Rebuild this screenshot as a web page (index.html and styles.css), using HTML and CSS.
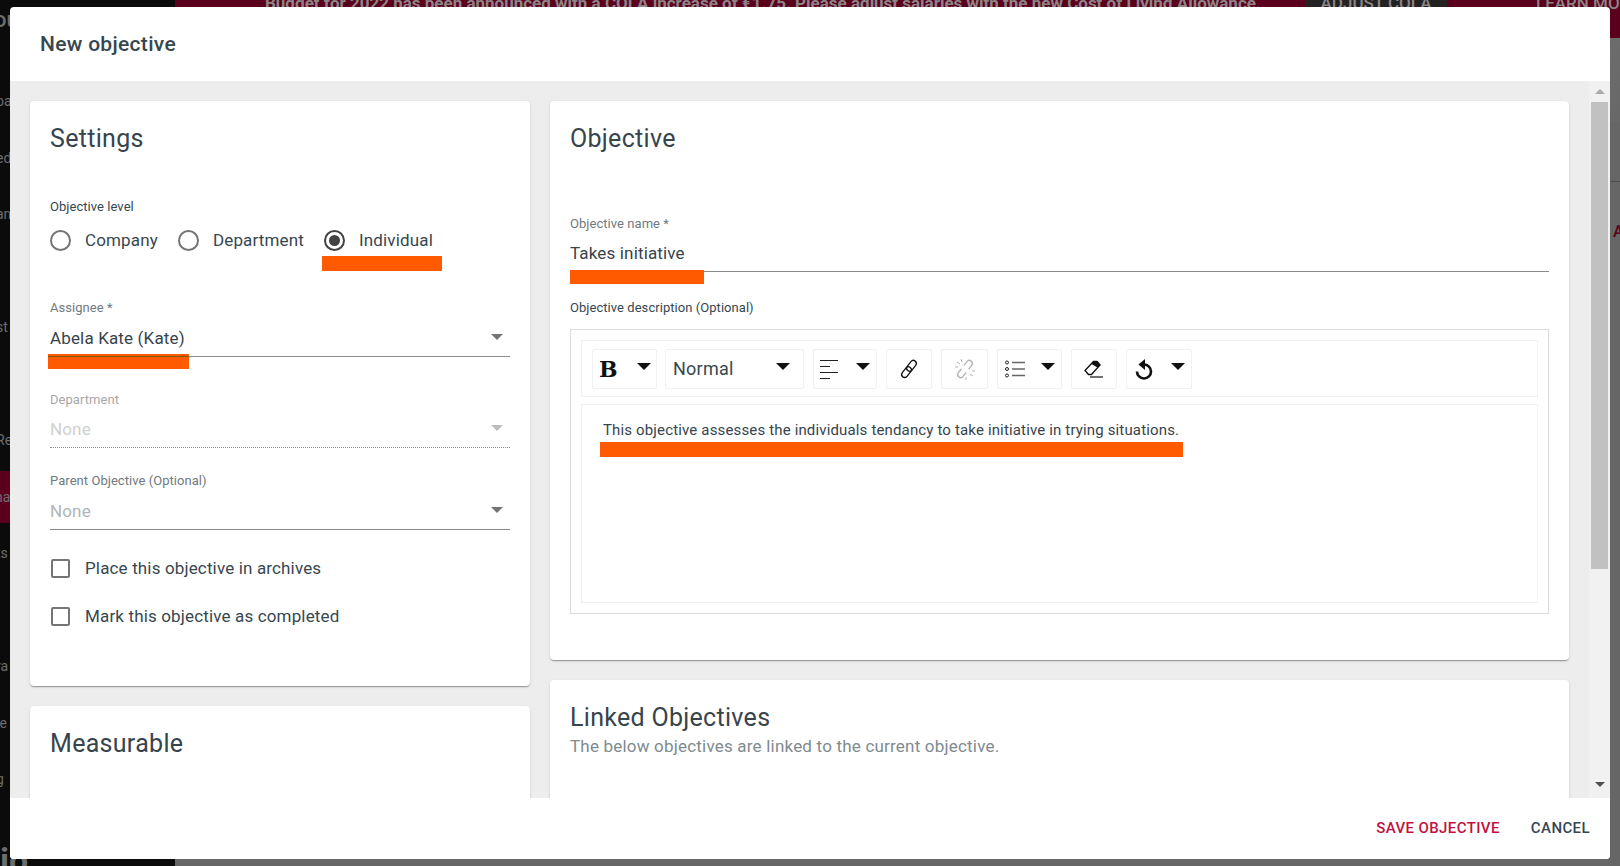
FILE: index.html
```html
<!DOCTYPE html>
<html lang="en">
<head>
<meta charset="utf-8">
<title>New objective</title>
<link rel="stylesheet" href="styles.css">
</head>
<body>
<div class="page">
  <aside class="sidebar">
    <div class="brand">ou</div>
    <nav class="nav">
      <div class="nav-item">oa</div>
      <div class="nav-item">ed</div>
      <div class="nav-item">an</div>
      <div class="nav-item"></div>
      <div class="nav-item">st</div>
      <div class="nav-item"></div>
      <div class="nav-item">Re</div>
      <div class="nav-item nav-active">na</div>
      <div class="nav-item">ts</div>
      <div class="nav-item"></div>
      <div class="nav-item">ra</div>
      <div class="nav-item">le</div>
      <div class="nav-item">g</div>
    </nav>
    <div class="sidebar-logo">io</div>
  </aside>
  <main class="main">
    <div class="banner">
      <span class="banner-text">Budget for 2022 has been announced with a COLA increase of €1.75. Please adjust salaries with the new Cost of Living Allowance.</span>
      <span class="banner-btn">ADJUST COLA</span>
      <span class="banner-link">LEARN MORE</span>
    </div>
    <div class="behind">
      <div class="behind-top"></div>
      <div class="behind-mid"></div>
      <div class="behind-link">A</div>
    </div>
  </main>
</div>

<div class="modal">
  <header class="modal-head">New objective</header>
  <div class="modal-body">
    <div class="scroll-content">
      <div class="col col-left">
        <section class="card card-settings">
          <h2 class="card-title">Settings</h2>
          <div class="label label-level">Objective level</div>
          <div class="radios">
            <label class="radio"><span class="radio-dot"></span>Company</label>
            <label class="radio"><span class="radio-dot"></span>Department</label>
            <label class="radio radio-on"><span class="radio-dot"></span>Individual<span class="mark mark-individual"></span></label>
          </div>
          <div class="field field-assignee">
            <div class="label">Assignee *</div>
            <div class="control control-assignee">
              <span class="value">Abela Kate (Kate)</span><span class="caret"></span>
              <span class="mark mark-assignee"></span>
            </div>
          </div>
          <div class="field field-dept">
            <div class="label label-disabled">Department</div>
            <div class="control control-disabled">
              <span class="value value-disabled">None</span><span class="caret caret-disabled"></span>
            </div>
          </div>
          <div class="field field-parent">
            <div class="label">Parent Objective (Optional)</div>
            <div class="control control-parent">
              <span class="value value-empty">None</span><span class="caret"></span>
            </div>
          </div>
          <label class="check check-first"><span class="check-box"></span>Place this objective in archives</label>
          <label class="check"><span class="check-box"></span>Mark this objective as completed</label>
        </section>
        <section class="card card-measurable">
          <h2 class="card-title">Measurable</h2>
        </section>
      </div>
      <div class="col col-right">
        <section class="card card-objective">
          <h2 class="card-title">Objective</h2>
          <div class="field field-name">
            <div class="label">Objective name *</div>
            <div class="control control-name">
              <span class="value">Takes initiative</span>
              <span class="mark mark-name"></span>
            </div>
          </div>
          <div class="label label-desc">Objective description (Optional)</div>
          <div class="wysiwyg">
            <div class="toolbar">
              <div class="tool tool-b"><span class="bold-glyph">B</span><span class="tool-caret"></span></div>
              <div class="tool tool-normal"><span class="normal-text">Normal</span><span class="tool-caret"></span></div>
              <div class="tool tool-align">
                <svg class="icon" width="18" height="20" viewBox="0 0 18 20"><path d="M0 1.5h18M0 7.5h10M0 13.5h18M0 19.5h10" stroke="#222" stroke-width="1" fill="none"/></svg>
                <span class="tool-caret"></span>
              </div>
              <div class="tool tool-icon">
                <svg width="22" height="22" viewBox="0 0 22 22"><g fill="none" stroke="#111" stroke-width="1.3" transform="rotate(-52 11 11)"><rect x="1" y="8" width="12" height="6" rx="3"/><rect x="9" y="8" width="12" height="6" rx="3"/></g></svg>
              </div>
              <div class="tool tool-icon tool-off">
                <svg width="22" height="22" viewBox="0 0 22 22"><g fill="none" stroke="#b5b5b5" stroke-width="1.4"><g transform="rotate(-52 11 11)"><path d="M9 8H4a3 3 0 0 0 0 6h5"/><path d="M13 8h5a3 3 0 0 1 0 6h-5"/></g><path d="M3 4l3 2M1 9l3 0M19 18l-3-2M21 13l-3 0M12 19v3M7 1l1 3" stroke-width="1"/></g></svg>
              </div>
              <div class="tool tool-list">
                <svg class="icon" width="20" height="18" viewBox="0 0 20 18"><g fill="none" stroke="#222"><circle cx="2" cy="2.5" r="1.5"/><circle cx="2" cy="9" r="1.5"/><circle cx="2" cy="15.5" r="1.5"/></g><path d="M7 2.5h13M7 9h13M7 15.500h13" stroke="#666" stroke-width="1.4"/></svg>
                <span class="tool-caret"></span>
              </div>
              <div class="tool tool-icon">
                <svg width="20" height="20" viewBox="0 0 20 20"><path d="M1 11.500L9.500 2.500h3l3.500 3.500-8.500 9.500H4.500z" fill="#fff" stroke="#111" stroke-width="1.3"/><path d="M7.500 5l2.500-3h3.500l3 3.500-3 3z" fill="#111"/><path d="M6 18h13" stroke="#111" stroke-width="1.200"/></svg>
              </div>
              <div class="tool tool-undo">
                <svg width="20" height="22" viewBox="0 0 20 22"><path d="M10 6.500a7 7 0 1 1-7 7" fill="none" stroke="#111" stroke-width="2.600"/><path d="M11 1L4.500 6.500 11 12z" fill="#111"/></svg>
                <span class="tool-caret"></span>
              </div>
            </div>
            <div class="editor">
              <p class="editor-text">This objective assesses the individuals tendancy to take initiative in trying situations.<span class="mark mark-text"></span></p>
            </div>
          </div>
        </section>
        <section class="card card-linked">
          <h2 class="card-title">Linked Objectives</h2>
          <p class="card-sub">The below objectives are linked to the current objective.</p>
        </section>
      </div>
    </div>
    <div class="scrollbar">
      <span class="sb-up"></span>
      <span class="sb-thumb"></span>
      <span class="sb-down"></span>
    </div>
  </div>
  <footer class="modal-foot">
    <button class="btn btn-save">SAVE OBJECTIVE</button>
    <button class="btn">CANCEL</button>
  </footer>
</div>
</body>
</html>
```
FILE: styles.css
```css
* { box-sizing: border-box; }
html, body { margin: 0; height: 100%; overflow: hidden; }
body { font-family: Roboto, "Liberation Sans", sans-serif; color: #37474f; background: #555; }

/* dimmed page behind the dialog */
.page { display: flex; height: 866px; }
.sidebar { width: 175px; flex: none; background: #0b0b0b; color: #6d6d6d; overflow: hidden; display: flex; flex-direction: column; }
.brand { height: 73px; flex: none; padding-top: 8px; font-size: 22px; line-height: 24px; margin-left: -6px; font-weight: 500; }
.nav { display: flex; flex-direction: column; flex: none; }
.nav-item { height: 56.5px; flex: none; line-height: 56.5px; font-size: 14px; margin-left: -4px; }
.nav-active { height: 52px; line-height: 52px; margin: 2px 0 2.5px; background: #5a001c; text-indent: -5px; }
.sidebar-logo { flex: none; margin-top: 35px; font-size: 34px; line-height: 34px; color: #6d6d6d; font-weight: 700; }
.main { flex: 1; display: flex; flex-direction: column; background: #666; min-width: 0; overflow: hidden; }
.banner { height: 38px; flex: none; display: flex; background: #5a001c; color: #8e8488; font-size: 17px; font-weight: 700; line-height: 18px; white-space: nowrap; }
.banner-text { width: 1130px; padding-left: 90px; margin-top: -6px; flex: none; overflow: hidden; }
.banner-btn { width: 142px; flex: none; height: 38px; background: #222; text-align: center; line-height: 6px; font-weight: 500; }
.banner-link { margin-left: 89px; line-height: 6px; font-weight: 500; }
.behind { flex: 1; position: relative; }
.behind-top { height: 84px; background: linear-gradient(#6c6c6c, #686868); }
.behind-mid { height: 60px; border-bottom: 1px solid #4d4d4d; }
.behind-link { position: absolute; left: 1438px; top: 184px; color: #5a001c; font-size: 16px; font-weight: 500; }

/* dialog */
.modal { position: absolute; left: 10px; top: 7px; width: 1600px; height: 852px; background: #fff; border-radius: 4px; overflow: hidden; display: flex; flex-direction: column; }
.modal-head { height: 74px; flex: none; padding-left: 30px; font-size: 21px; font-weight: 500; line-height: 74px; letter-spacing: .3px; color: #37474f; }
.modal-body { flex: 1; min-height: 0; display: flex; background: #ededed; }
.scroll-content { flex: 1; min-width: 0; display: flex; gap: 20px; padding: 20px 20px 0; overflow: hidden; }
.col { display: flex; flex-direction: column; gap: 20px; flex: none; }
.col-left { width: 500px; }
.col-right { width: 1019px; }
.scrollbar { width: 21px; flex: none; background: #f1f1f1; display: flex; flex-direction: column; align-items: center; }
.sb-up { width: 0; height: 0; margin-top: 8px; border: 5px solid transparent; border-top: 0; border-bottom-color: #a8a8a8; }
.sb-thumb { width: 17px; height: 467px; margin-top: 8px; background: #c1c1c1; }
.sb-down { width: 0; height: 0; margin-top: 213px; border: 5px solid transparent; border-bottom: 0; border-top-color: #505050; }
.modal-foot { height: 61px; flex: none; display: flex; justify-content: flex-end; align-items: center; gap: 31px; padding: 0 20px 1px 0; background: #fff; }
.btn { border: 0; background: none; padding: 0; font: 500 15px Roboto, sans-serif; letter-spacing: .4px; color: #37474f; }
.btn-save { color: #c2113e; }

/* cards */
.card { background: #fff; border-radius: 4px; padding: 20px; box-shadow: 0 2px 1px -1px rgba(0,0,0,.2), 0 1px 1px 0 rgba(0,0,0,.14), 0 1px 3px 0 rgba(0,0,0,.12); flex: none; }
.card-settings { height: 585px; }
.card-measurable { height: 300px; }
.card-objective { height: 559px; }
.card-linked { height: 300px; }
.card-title { margin: 1px 0 -1px; font-size: 25px; font-weight: 400; line-height: 34px; letter-spacing: .3px; color: #37444c; }
.card-sub { margin: 0; font-size: 17px; line-height: 24px; letter-spacing: .2px; color: #808a8f; }

.label { font-size: 13px; line-height: 14px; letter-spacing: .05px; color: #6f7a80; }
.label-level { margin-top: 45px; color: #37474f; }
.label-disabled { color: #a8a8a8; }
.label-desc { margin-top: 29px; color: #37474f; }

.radios { display: flex; gap: 20px; margin-top: 14px; }
.radio { display: flex; align-items: center; gap: 14px; height: 24px; font-size: 17px; letter-spacing: .15px; position: relative; }
.radio-dot { width: 21px; height: 21px; border: 2px solid #757575; border-radius: 50%; display: flex; align-items: center; justify-content: center; }
.radio-on .radio-dot { border-color: #424242; }
.radio-on .radio-dot::after { content: ""; width: 11px; height: 11px; border-radius: 50%; background: #424242; }

.field-assignee { margin-top: 49px; }
.field-dept { margin-top: 36px; }
.field-parent { margin-top: 26px; }
.field-name { margin-top: 62px; }
.control { position: relative; display: flex; justify-content: space-between; align-items: center; padding-bottom: 8px; border-bottom: 1px solid #8a8a8a; }
.control-assignee, .control-parent { margin-top: 13px; }
.control-name { margin-top: 12px; }
.control-disabled { margin-top: 12px; border-bottom: 1px dotted #8a8a8a; }
.value { font-size: 17px; line-height: 20px; letter-spacing: .15px; color: #37444c; }
.value-disabled { color: #d0d0d0; }
.value-empty { color: #b0b4b7; }
.caret { width: 0; height: 0; margin: -2px 7px 0 0; border: 6px solid transparent; border-bottom: 0; border-top-color: #757575; }
.caret-disabled { border-top-color: #bdbdbd; }

.check { display: flex; align-items: center; gap: 15px; height: 24px; margin-top: 24px; font-size: 17px; letter-spacing: .15px; position: relative; top: -1px; }
.check-first { margin-top: 27px; }
.check-box { width: 19px; height: 19px; margin-left: 1px; border: 2px solid #757575; border-radius: 2px; }

/* highlighter strokes painted over the screenshot */
.mark { position: absolute; background: #ff5a00; }
.mark-individual { left: -2px; top: 28px; width: 120px; height: 15px; }
.mark-assignee { left: -2px; top: 26px; width: 141px; height: 15px; background: linear-gradient(#ff5a00 2px, #7c5a0c 2px, #7c5a0c 3px, #ff5a00 3px); }
.mark-name { left: 0; top: 27px; width: 134px; height: 14px; }
.mark-text { left: -3px; top: 21px; width: 583px; height: 15px; }

/* rich text editor */
.wysiwyg { margin-top: 14px; height: 285px; border: 1px solid #dcdcdc; padding: 10px; }
.toolbar { height: 57px; border: 1px solid #f1f1f1; padding: 8px 0 0 10px; display: flex; gap: 9px; }
.tool { height: 40px; border: 1px solid #f1f1f1; border-radius: 2px; display: flex; align-items: center; position: relative; padding-left: 6px; }
.tool-b { width: 65px; margin-right: -1px; }
.tool-normal { width: 139px; padding-left: 7px; }
.tool-align { width: 64px; }
.tool-icon { width: 46px; justify-content: center; padding: 0; }
.tool-off { width: 47px; }
.tool-list { width: 65px; padding-left: 7px; }
.tool-undo { width: 66px; padding-left: 7px; }
.tool-caret { position: absolute; right: 6px; top: 13px; width: 0; height: 0; border: 7px solid transparent; border-bottom: 0; border-top-color: #111; }
.tool-b .tool-caret { right: 5px; }
.tool-normal .tool-caret { right: 13px; }
.bold-glyph { font: 700 22px/1 "DejaVu Serif", serif; color: #111; }
.normal-text { font-size: 18px; letter-spacing: .25px; color: #37474f; margin-top: -2px; }
.editor { height: 199px; margin-top: 7px; border: 1px solid #f1f1f1; padding: 16px 0 0 21px; }
.editor-text { margin: 0; position: relative; font-size: 15px; line-height: 18px; letter-spacing: .15px; color: #37444c; }
```
